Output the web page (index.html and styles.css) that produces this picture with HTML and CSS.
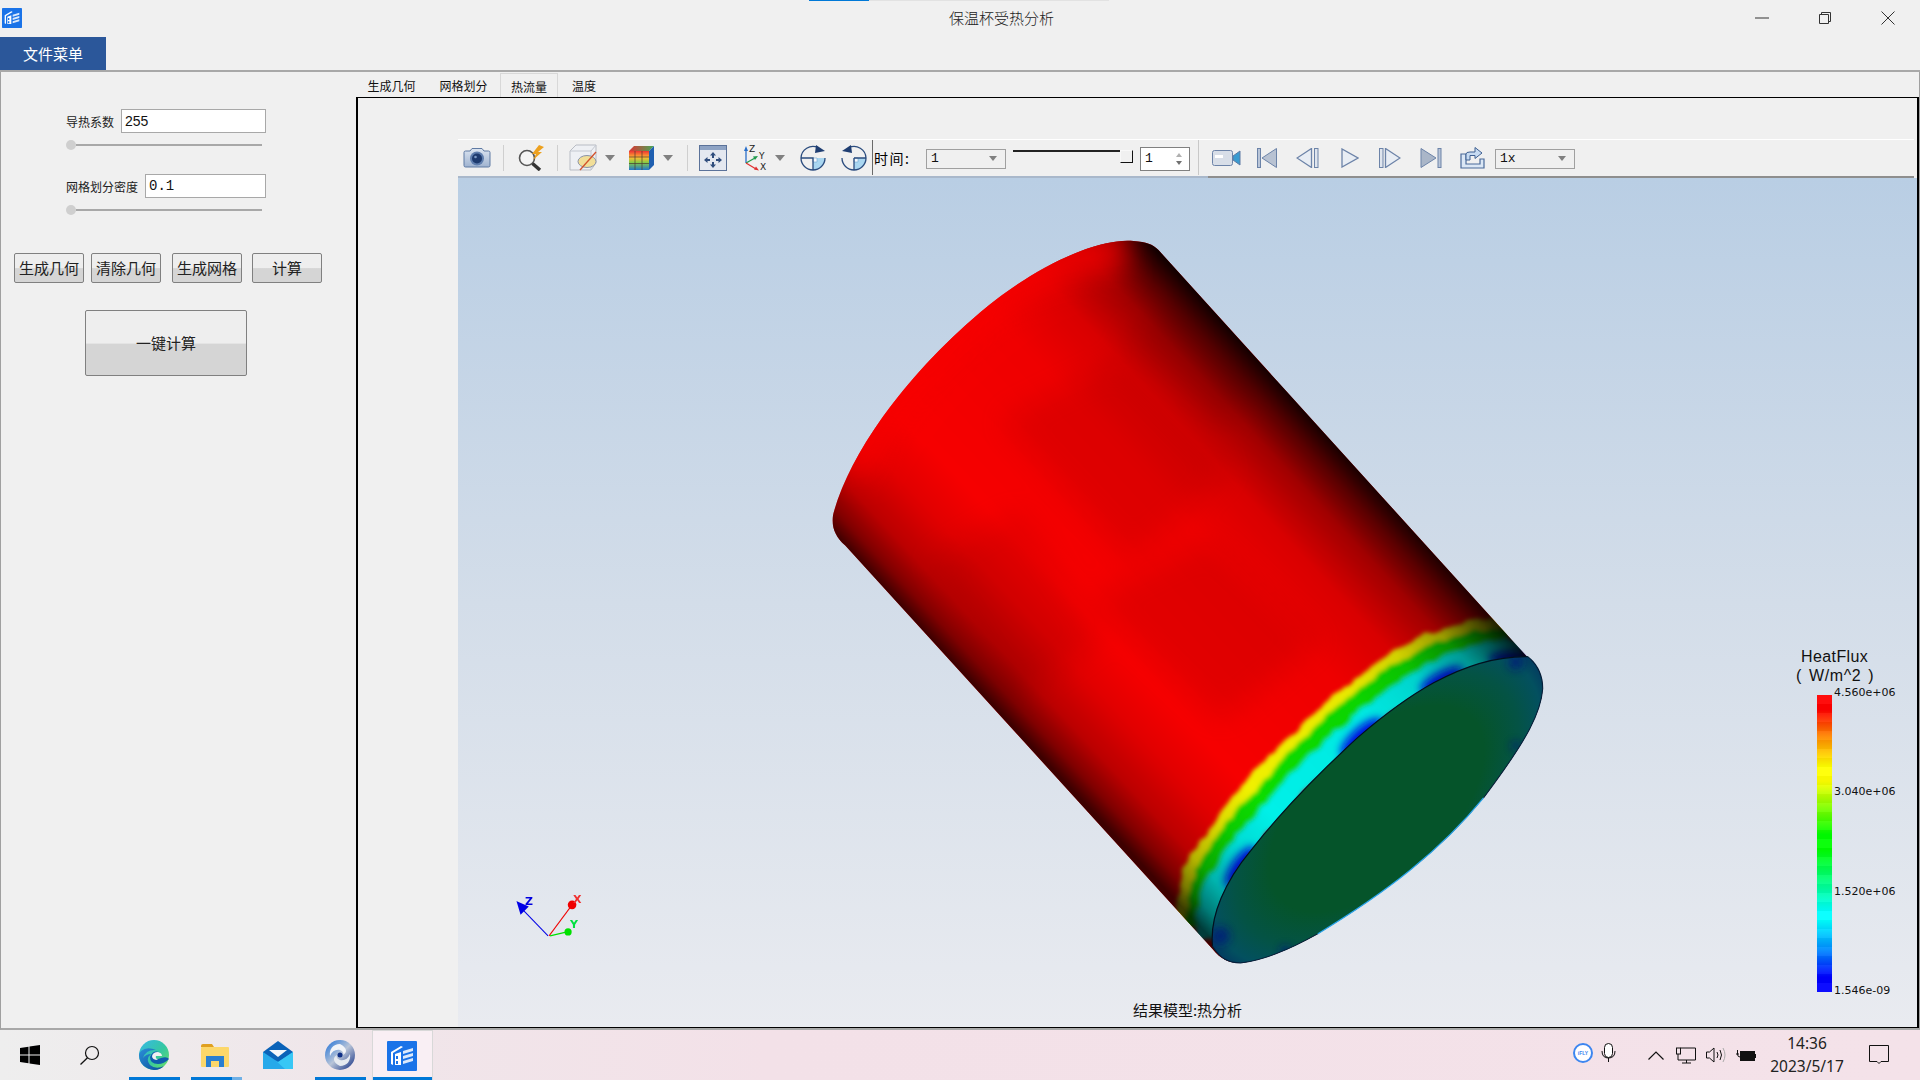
FILE: index.html
```html
<!DOCTYPE html>
<html lang="zh-CN">
<head>
<meta charset="utf-8">
<title>保温杯受热分析</title>
<link rel="stylesheet" href="styles.css">
</head>
<body>
<div class="window-strip"></div>
<header class="titlebar">
  <svg class="app-icon-small" viewBox="0 0 30 30"><rect width="30" height="30" rx="1" fill="#1a73e8"/><path d="M4 11 L14 5 L16 6 L6 12 V24 L4 23Z M8 13 L14 11 V24 L8 24Z" fill="#fff"/><path d="M16 10 L26 7 V10 L16 13Z M16 15 L26 12 V15 L16 18Z M16 20 L26 17 V20 L16 23Z" fill="#dbe9fb"/><path d="M9 15h2v3H9z M9 20h2v3H9z" fill="#1a73e8"/></svg>
  <div class="title-text">保温杯受热分析</div>
  <div class="win-controls">
    <svg class="win-min" viewBox="0 0 14 14"><path d="M0 7H14" stroke="#333" stroke-width="1"/></svg>
    <svg class="win-max" viewBox="0 0 14 14"><path d="M3.5 3.5V1.5H12.5V10.5H10.5M1.5 3.5H10.5V12.5H1.5Z" fill="none" stroke="#333"/></svg>
    <svg class="win-close" viewBox="0 0 14 14"><path d="M0.5 0.5L13.5 13.5M13.5 0.5L0.5 13.5" stroke="#333"/></svg>
  </div>
</header>
<nav class="menubar"><button class="menu-btn">文件菜单</button></nav>
<main class="main">
  <aside class="side">
    <div class="field field-one"><label>导热系数</label><input class="inp inp-a" value="255"></div>
    <div class="hslider"><span class="knob"></span><span class="track"></span></div>
    <div class="field field-two"><label>网格划分密度</label><input class="inp inp-b mono" value="0.1"></div>
    <div class="hslider"><span class="knob"></span><span class="track"></span></div>
    <div class="btn-row">
      <button class="btn">生成几何</button>
      <button class="btn">清除几何</button>
      <button class="btn btn-wide-gap">生成网格</button>
      <button class="btn btn-mid-gap">计算</button>
    </div>
    <button class="btn big">一键计算</button>
  </aside>
  <section class="work">
    <div class="tabs">
      <div class="tab t1">生成几何</div>
      <div class="tab t2">网格划分</div>
      <div class="tab t3 active">热流量</div>
      <div class="tab t4">温度</div>
    </div>
    <div class="frame">
      <div class="viewer">
        <div class="toolbar">
          <svg class="i-cam" viewBox="0 0 28 21"><defs><linearGradient id="cg" x1="0" y1="0" x2="0" y2="1"><stop offset="0" stop-color="#dce5f1"/><stop offset="1" stop-color="#9fb3d0"/></linearGradient></defs><path d="M1 5.5Q1 4 2.5 4H7L9 1.5H19L21 4H25.5Q27 4 27 5.500V18.500Q27 20 25.500 20H2.500Q1 20 1 18.500Z" fill="url(#cg)" stroke="#5f7aa3"/><circle cx="14" cy="11.500" r="7" fill="#5f7eae"/><circle cx="14" cy="11.500" r="5" fill="#1d3a6e"/><circle cx="12.500" cy="10" r="1.300" fill="#7d9ac6"/></svg>
          <span class="sep s1"></span>
          <svg class="i-mag" viewBox="0 0 29 26"><circle cx="11" cy="13" r="7.500" fill="#f4f4f4" stroke="#555" stroke-width="1.600"/><path d="M16.500 18.500L24 25" stroke="#333" stroke-width="3.500"/><path d="M23 0L16 9H20L17 15L26 7H22L28 2Z" fill="#eda11f"/></svg>
          <span class="sep s2"></span>
          <svg class="i-box" viewBox="0 0 29 28"><path d="M1 7L7 1H27V19L22 26H1Z" fill="#eef0f4" stroke="#b8bcc4"/><path d="M1 7H22V26M22 7L27 1" fill="none" stroke="#c4c8d0"/><ellipse cx="18" cy="17.500" rx="9" ry="6" fill="#f1de98" stroke="#8a93a8"/><path d="M11 26L27 8" stroke="#d2502a" stroke-width="1.300"/></svg>
          <svg class="caret c1" viewBox="0 0 10 6"><path d="M0 0H10L5 6Z" fill="#808080"/></svg>
          <svg class="i-cube" viewBox="0 0 27 26"><defs><linearGradient id="rb" x1="0" y1="0" x2="0" y2="1"><stop offset="0" stop-color="#e33"/><stop offset=".35" stop-color="#fb3"/><stop offset=".6" stop-color="#8c4"/><stop offset="1" stop-color="#27c"/></linearGradient><linearGradient id="rt" x1="0" y1="0" x2="1" y2="0"><stop offset="0" stop-color="#d33"/><stop offset="1" stop-color="#4a5"/></linearGradient></defs><path d="M1 6L6 1H26L21 6Z" fill="url(#rt)"/><path d="M1 6H21V25H1Z" fill="url(#rb)"/><path d="M21 6L26 1V20L21 25Z" fill="#1f5fb0"/><path d="M7 6V25M14 6V25M1 12H21M1 18.500H21" stroke="#4a3a30" stroke-width=".7"/></svg>
          <svg class="caret c2" viewBox="0 0 10 6"><path d="M0 0H10L5 6Z" fill="#808080"/></svg>
          <span class="sep s3"></span>
          <svg class="i-fit" viewBox="0 0 28 26"><rect x=".5" y=".5" width="27" height="25" fill="#e4e8f0" stroke="#5b7299"/><rect x="1" y="1" width="26" height="4" fill="#8ea3c4"/><path d="M14 7L11 10.500H13V13H15V10.500H17Z M14 23L11 19.500H13V17H15V19.500H17Z M5 15L8.500 12V14H11V16H8.500V18Z M23 15L19.500 12V14H17V16H19.500V18Z" fill="#2f4d7d"/></svg>
          <svg class="i-xyz" viewBox="0 0 23 27"><path d="M2 19V5" stroke="#2a6fc9" stroke-width="1.300"/><path d="M2 2L0 7H4Z" fill="#2a6fc9"/><path d="M2 19L11 14" stroke="#1f9a4c" stroke-width="1.300"/><path d="M14 12L9 12.500L11 16Z" fill="#1f9a4c"/><path d="M2 19L12 25" stroke="#e03030" stroke-width="1.300"/><path d="M15 26.500L10 25.500L12 22.500Z" fill="#e03030"/><text x="5" y="8" class="xyz-t">Z</text><text x="15" y="15" class="xyz-t">Y</text><text x="16" y="26" class="xyz-t">X</text></svg>
          <svg class="caret c3" viewBox="0 0 10 6"><path d="M0 0H10L5 6Z" fill="#808080"/></svg>
          <svg class="i-rot" viewBox="0 0 26 26"><path d="M13 13H25A12 12 0 0 1 13 25Z" fill="#a9d6f0"/><path d="M13 13h4v4h-4z" fill="#f4f8fc" stroke="#6ea4d0" stroke-width=".6"/><path d="M18 2.500A12 12 0 0 0 1 13A12 12 0 0 0 25 13M1 13H13V25" fill="none" stroke="#2b4c7e" stroke-width="1.300"/><path d="M16 0L25 6L15 8Z" fill="#1f3e72"/></svg>
          <svg class="i-rot2" viewBox="0 0 26 26"><path d="M13 13H25A12 12 0 0 1 13 25Z" fill="#a9d6f0"/><path d="M13 13h4v4h-4z" fill="#f4f8fc" stroke="#6ea4d0" stroke-width=".6"/><path d="M8 2.500A12 12 0 0 1 25 13A12 12 0 0 1 1 13M13 13H25M13 13V25" fill="none" stroke="#2b4c7e" stroke-width="1.300"/><path d="M10 0L1 6L11 8Z" fill="#1f3e72"/></svg>
          <span class="vline dark"></span>
          <span class="time-label">时间:</span>
          <div class="combo combo-a mono"><span>1</span><svg class="combo-caret" viewBox="0 0 8 5"><path d="M0 0H8L4 5Z" fill="#808080"/></svg></div>
          <div class="tslider"><span class="tline"></span><span class="thandle"></span></div>
          <div class="spin mono"><span>1</span><svg class="spin-arrows" viewBox="0 0 6 12"><path d="M3 0L6 4H0Z" fill="#b0b0b0"/><path d="M3 12L6 8H0Z" fill="#707070"/></svg></div>
          <span class="vline light"></span>
          <svg class="i-video" viewBox="0 0 29 16"><rect x=".5" y=".5" width="20" height="15" rx="2" fill="#d8dee8" stroke="#6c83a8"/><rect x="3" y="5" width="8" height="3" fill="#fff"/><path d="M21 6L28 1V15L21 10Z" fill="#3a9bd0" stroke="#5f7aa3"/></svg>
          <svg class="i-first" viewBox="0 0 20 20"><rect x=".5" y=".5" width="3" height="19" fill="#b9c5d8" stroke="#6c83a8"/><path d="M19.500 .5V19.500L5 10Z" fill="#b8c2d2" stroke="#6c83a8"/></svg>
          <svg class="i-prev" viewBox="0 0 23 20"><path d="M15.500 .5V19.500L1 10Z" fill="#e8edf4" stroke="#6c83a8" stroke-width="1.300"/><rect x="18.500" y=".5" width="3.500" height="19" fill="#dfe5ee" stroke="#6c83a8"/></svg>
          <svg class="i-play" viewBox="0 0 18 20"><path d="M1 1V19L17 10Z" fill="#e8edf4" stroke="#6c83a8" stroke-width="1.300"/></svg>
          <svg class="i-nexts" viewBox="0 0 22 20"><rect x=".5" y=".5" width="3.500" height="19" fill="#dfe5ee" stroke="#6c83a8"/><path d="M6.500 .5V19.500L21 10Z" fill="#e8edf4" stroke="#6c83a8" stroke-width="1.300"/></svg>
          <svg class="i-last" viewBox="0 0 22 20"><path d="M1 .5V19.500L16 10Z" fill="#aab6c8" stroke="#6c83a8"/><rect x="18" y=".5" width="3" height="19" fill="#b9c5d8" stroke="#6c83a8"/></svg>
          <svg class="i-export" viewBox="0 0 25 23"><path d="M1 8H6V18H20V13H24V22H1Z" fill="#dbe7f5" stroke="#4a6a9a" stroke-width="1.200"/><path d="M6 14V8Q6 6 10 6H15V1.500L22 7L15 12.500V9.500H10V14Z" fill="#c6daf1" stroke="#3f6092"/></svg>
          <div class="combo combo-b mono"><span>1x</span><svg class="combo-caret" viewBox="0 0 8 5"><path d="M0 0H8L4 5Z" fill="#808080"/></svg></div>
        </div>
        <div class="canvas">
          <svg class="scene" viewBox="458 178 1458 848" preserveAspectRatio="none">
            <defs>
              <clipPath id="body"><path d="M845 545C833 535 830 522 834 510C850 455 900 380 980 312C1040 262 1100 238 1133 241C1146 242 1152 244 1158 250L1527 657C1537 664 1542 675 1542 688C1540 715 1522 745 1483 797C1440 850 1385 892 1317 933C1290 948 1262 960 1240 962C1228 962 1220 958 1212 948Z"/></clipPath>
              <clipPath id="capclip"><path d="M1212 945C1209 915 1225 880 1250 850C1275 818 1310 780 1357 737C1400 700 1460 655 1527 656C1537 664 1542 675 1542 688C1540 715 1522 745 1483 797C1440 850 1385 892 1317 933C1290 948 1262 960 1240 962C1228 962 1220 958 1212 945Z"/></clipPath>
              <linearGradient id="shade" gradientUnits="userSpaceOnUse" x1="833" y1="533" x2="1148" y2="239">
                <stop offset="0" stop-color="#000" stop-opacity=".75"/>
                <stop offset=".04" stop-color="#000" stop-opacity=".48"/>
                <stop offset=".1" stop-color="#000" stop-opacity=".24"/>
                <stop offset=".2" stop-color="#000" stop-opacity=".08"/>
                <stop offset=".3" stop-color="#000" stop-opacity="0"/>
                <stop offset=".62" stop-color="#000" stop-opacity=".03"/>
                <stop offset=".76" stop-color="#000" stop-opacity=".12"/>
                <stop offset=".87" stop-color="#000" stop-opacity=".35"/>
                <stop offset=".94" stop-color="#000" stop-opacity=".65"/>
                <stop offset="1" stop-color="#000" stop-opacity=".95"/>
              </linearGradient>
              <radialGradient id="capfill" gradientUnits="userSpaceOnUse" cx="0" cy="0" r="1" gradientTransform="translate(1376 808) rotate(-43) scale(212 112)">
                <stop offset="0" stop-color="#05542a"/>
                <stop offset=".62" stop-color="#05542a"/>
                <stop offset=".82" stop-color="#045345"/>
                <stop offset=".95" stop-color="#03505f"/>
                <stop offset="1" stop-color="#034060"/>
              </radialGradient>
              <filter id="wob" x="-10%" y="-10%" width="120%" height="120%">
                <feTurbulence type="fractalNoise" baseFrequency="0.05" numOctaves="2" seed="11"/>
                <feDisplacementMap in="SourceGraphic" scale="10" xChannelSelector="R" yChannelSelector="G"/>
                <feGaussianBlur stdDeviation="2.200"/>
              </filter>
              <filter id="soft" x="-60%" y="-60%" width="220%" height="220%"><feGaussianBlur stdDeviation="4.500"/></filter>
              <filter id="softer" x="-50%" y="-50%" width="200%" height="200%"><feGaussianBlur stdDeviation="14"/></filter>
            </defs>
            <g clip-path="url(#body)">
              <rect x="800" y="220" width="780" height="760" fill="#f60000"/>
              <g filter="url(#softer)" fill="#a00000" opacity=".2">
                <path d="M1000 420L1120 360L1230 470L1130 560Z"/>
                <path d="M1090 600L1210 540L1320 640L1220 720Z"/>
                <path d="M930 560L1020 510L1100 640L1010 700Z"/>
                <path d="M1180 300L1260 380L1220 430L1120 340Z"/>
              </g>
              <g filter="url(#wob)" fill="none">
                <path transform="translate(-23 -26)" d="M1212 945C1209 915 1225 880 1250 850C1275 818 1310 780 1357 737C1400 700 1460 655 1527 656" stroke="#f0f000" stroke-width="26"/>
                <path transform="translate(-17 -19)" d="M1212 945C1209 915 1225 880 1250 850C1275 818 1310 780 1357 737C1400 700 1460 655 1527 656" stroke="#0cdc00" stroke-width="22"/>
                <path transform="translate(-5 -6)" d="M1212 945C1209 915 1225 880 1250 850C1275 818 1310 780 1357 737C1400 700 1460 655 1527 656" stroke="#06f0e8" stroke-width="22"/>
              </g>
              <g filter="url(#soft)" fill="#0008e8">
                <ellipse cx="1361" cy="737" rx="27" ry="10" transform="rotate(-42 1361 737)"/>
                <ellipse cx="1240" cy="866" rx="24" ry="9" transform="rotate(-55 1240 866)"/>
                <ellipse cx="1441" cy="679" rx="24" ry="8" transform="rotate(-28 1441 679)"/>
                <ellipse cx="1510" cy="657" rx="22" ry="7" transform="rotate(-3 1510 657)"/>
              </g>
              <rect x="800" y="220" width="780" height="760" fill="url(#shade)"/>
              <path d="M850 470C880 400 930 350 985 305C1040 262 1090 250 1125 250" fill="none" stroke="#f60000" stroke-width="46" opacity=".8" filter="url(#softer)"/>
            </g>
            <path d="M1212 945C1209 915 1225 880 1250 850C1275 818 1310 780 1357 737C1400 700 1460 655 1527 656C1537 664 1542 675 1542 688C1540 715 1522 745 1483 797C1440 850 1385 892 1317 933C1290 948 1262 960 1240 962C1228 962 1220 958 1212 945Z" fill="url(#capfill)"/>
            <g clip-path="url(#capclip)">
              <g filter="url(#soft)" fill="#021a78" opacity=".85">
                <circle cx="1220" cy="935" r="9"/>
                <circle cx="1515" cy="662" r="7"/>
                <circle cx="1285" cy="950" r="5"/>
                <circle cx="1515" cy="745" r="4"/>
              </g>
            </g>
            <path d="M1483 797C1440 850 1385 892 1317 933" fill="none" stroke="#29a7ee" stroke-width="1.200"/>
            <path d="M1212 945C1209 915 1225 880 1250 850C1275 818 1310 780 1357 737C1400 700 1460 655 1527 656" fill="none" stroke="#02101e" stroke-width="1.200"/>
            <path d="M1527 656C1537 664 1542 675 1542 688C1540 715 1522 745 1483 797M1317 933C1290 948 1262 960 1240 962C1228 962 1220 958 1212 945" fill="none" stroke="#04203c" stroke-width="1"/>
            <path d="M548 935L520 906" stroke="#0000e6" stroke-width="1"/>
            <path d="M518 902L527 906L521 912Z" fill="#0000e6" stroke="#0000e6" stroke-width="2"/>
            <text x="525" y="904" class="axis-t axis-z">Z</text>
            <path d="M549 935L572 904" stroke="#f00000" stroke-width="1"/>
            <circle cx="572" cy="904" r="4.300" fill="#f00000"/>
            <text x="573" y="902" class="axis-t axis-x">X</text>
            <path d="M550 935L567 931" stroke="#00e000" stroke-width="1.300"/>
            <circle cx="568" cy="931" r="3.600" fill="#00e000"/>
            <text x="570" y="927" class="axis-t axis-y">Y</text>
          </svg>
          <div class="legend">
            <div class="legend-title">HeatFlux</div>
            <div class="legend-unit">( W/m^2 )</div>
            <div class="legend-body">
              <div class="legend-bar"></div>
              <div class="legend-labels">
                <span>4.560e+06</span><span>3.040e+06</span><span>1.520e+06</span><span>1.546e-09</span>
              </div>
            </div>
          </div>
          <div class="caption">结果模型:热分析</div>
        </div>
      </div>
    </div>
  </section>
</main>
<footer class="taskbar">
  <svg class="tb-win" viewBox="0 0 20 20"><path d="M0 3L8.500 1.700V9.500H0Z M9.500 1.500L20 0V9.500H9.500Z M0 10.500H8.500V18.300L0 17Z M9.500 10.500H20V20L9.500 18.500Z" fill="#000"/></svg>
  <svg class="tb-search" viewBox="0 0 20 20"><circle cx="12" cy="8" r="6.500" fill="none" stroke="#111" stroke-width="1.200"/><path d="M7.500 12.800L.5 19.500" stroke="#111" stroke-width="1.300"/></svg>
  <div class="task-slot slot-edge on"><svg viewBox="0 0 30 30"><defs><linearGradient id="eg" x1="0" y1="0" x2="1" y2="1"><stop offset="0" stop-color="#36b8e8"/><stop offset=".55" stop-color="#35c8a0"/><stop offset="1" stop-color="#6ee060"/></linearGradient><linearGradient id="eb" x1="0" y1="0" x2="1" y2="1"><stop offset="0" stop-color="#2b8fd8"/><stop offset="1" stop-color="#0a4f9c"/></linearGradient></defs><circle cx="15" cy="15" r="15" fill="url(#eg)"/><path d="M0 15A15 15 0 0 0 25 26Q17 30 11 25Q6 19 12 14Q7 14 4 18Q7 9 17 10Q8 6 2 11Q0 13 0 15Z" fill="url(#eb)"/><path d="M11 17Q11 24 19 24Q25 24 30 19Q28 16 22 18Q16 21 15.500 16Q16 13 20 12Q14 10 11 17Z" fill="#0e5dae"/><path d="M13 16Q14 12 19 12Q23 13 23 16H17Q16 18 19 20Q13 20 13 16Z" fill="#f1f1f1"/></svg></div>
  <div class="task-slot slot-files on split"><svg viewBox="0 0 28 23"><path d="M0 2Q0 0 2 0H11L13 3H0Z" fill="#e0a020"/><rect y="3" width="28" height="20" rx="1" fill="#fcd76a"/><path d="M5 12H23V23H18V17H10V23H5Z" fill="#2a7fd0"/></svg></div>
  <div class="task-slot slot-mail"><svg viewBox="0 0 30 28"><path d="M0 11L15 0L30 11V28H0Z" fill="#0a62b8"/><path d="M6 9H24L15 16Z" fill="#f3f6fb"/><path d="M0 11L15 21L30 11V28H0Z" fill="#27a9ea"/><path d="M12 19L15 21L30 11V28H22Z" fill="#38c7f5"/></svg></div>
  <div class="task-slot slot-qq on"><svg viewBox="0 0 30 30"><defs><linearGradient id="qg" x1="0" y1="0" x2="1" y2="1"><stop offset="0" stop-color="#1a6fd8"/><stop offset=".5" stop-color="#b8c4d8"/><stop offset="1" stop-color="#0d2a80"/></linearGradient></defs><circle cx="15" cy="15" r="15" fill="url(#qg)"/><path d="M15 4C8 4 4 9 5 16C7 11 11 9 15 10C18 11 19 13 18 15C22 13 23 8 15 4Z" fill="#f2f4f8"/><path d="M15 26C22 26 26 21 25 14C23 19 19 21 15 20C12 19 11 17 12 15C8 17 7 22 15 26Z" fill="#e6eaf0"/><circle cx="15" cy="15" r="2.500" fill="#0f2f86"/></svg></div>
  <div class="task-slot slot-app on active"><svg viewBox="0 0 30 30"><rect width="30" height="30" rx="1" fill="#1a73e8"/><path d="M4 11L14 5L16 6L6 12V24L4 23Z M8 13L14 11V24H8Z" fill="#fff"/><path d="M16 10L26 7V10L16 13Z M16 15L26 12V15L16 18Z M16 20L26 17V20L16 23Z" fill="#dbe9fb"/><path d="M9 15h2v3H9z M9 20h2v3H9z" fill="#1a73e8"/></svg></div>
  <div class="tray">
    <div class="ifly"><span>iFLY</span></div>
    <svg class="tr-mic" viewBox="0 0 15 20"><rect x="3.500" y=".5" width="8" height="14" rx="4" fill="#fff" stroke="#111"/><path d="M1 8Q1 15 7.500 15Q14 15 14 8M7.500 15V19" fill="none" stroke="#111"/></svg>
    <svg class="tr-up" viewBox="0 0 16 9"><path d="M.5 8.500L8 1L15.500 8.500" fill="none" stroke="#111" stroke-width="1.200"/></svg>
    <svg class="tr-net" viewBox="0 0 20 17"><path d="M4.500 1H19.500V13H2V7M10.500 13V16M6 16H15" fill="none" stroke="#111"/><rect x=".5" y="1" width="4" height="6" fill="#f3e3e9" stroke="#111"/></svg>
    <svg class="tr-vol" viewBox="0 0 20 16"><path d="M.5 5H3.500L8 1V15L3.500 11H.5Z" fill="none" stroke="#111"/><path d="M11 5Q13 8 11 11M14 3Q17 8 14 13" fill="none" stroke="#111"/><path d="M17 1Q21 8 17 15" fill="none" stroke="#aaa"/></svg>
    <svg class="tr-bat" viewBox="0 0 20 13"><rect x="4.500" y="2.500" width="14" height="9" fill="#111" stroke="#111"/><rect x="18.500" y="5" width="1.500" height="4" fill="#111"/><path d="M0 5H3M1.500 1V5Q1.500 8 4 8" fill="none" stroke="#111"/></svg>
    <div class="clock"><div>14:36</div><div>2023/5/17</div></div>
    <svg class="tr-note" viewBox="0 0 20 20"><path d="M.5 .5H19.500V16.500H12L10 18.500L8 16.500H.5Z" fill="none" stroke="#111"/></svg>
  </div>
</footer>
</body>
</html>
```
FILE: styles.css
```css
* { box-sizing: border-box; }
html, body { margin: 0; height: 100%; }
body {
  width: 1920px; height: 1080px; overflow: hidden; display: flex; flex-direction: column;
  background: #f0f0f0; color: #111;
  font: 12px "Noto Sans CJK SC", "Liberation Sans", sans-serif; position: relative;
}
.mono { font-family: "Liberation Mono", "Noto Sans CJK SC", monospace; }
svg { display: block; flex: none; }

.window-strip {
  position: absolute; left: 809px; top: 0; width: 300px; height: 1px;
  background: linear-gradient(90deg, #0078d7 0 60px, #e2e2e2 60px);
}

.titlebar { height: 37px; flex: none; display: flex; align-items: center; padding: 0 0 2px 2px; position: relative; }
.app-icon-small { width: 20px; height: 20px; margin-top: 1px; }
.title-text { position: absolute; left: 0; right: 0; top: 8px; text-align: center; font-size: 15px; line-height: 20px; padding-left: 83px; color: #222; font-weight: 300; }
.win-controls { margin-left: auto; display: flex; align-items: center; }
.win-min, .win-max, .win-close { width: 14px; height: 14px; }
.win-min { margin-right: 49px; }
.win-max { margin-right: 49px; }
.win-close { margin-right: 25px; }

.menubar { height: 35px; flex: none; border-bottom: 2px solid #a8a8a8; }
.menu-btn {
  display: block; width: 106px; height: 33px; border: 0; padding: 0;
  background: #2b579a; color: #fff; font: 15px "Noto Sans CJK SC", sans-serif;
}

.main { flex: 1; display: flex; border-left: 1px solid #a0a0a0; border-right: 1px solid #a0a0a0; border-bottom: 2px solid #a8a8a8; min-height: 0; }

.side { width: 355px; flex: none; padding: 37px 0 0 65px; }
.field { display: flex; align-items: center; height: 24px; }
.field label { white-space: nowrap; font-size: 12px; width: 55px; color: #222; }
.field-two { margin-top: 23px; }
.field-two label { width: 79px; }
.inp { height: 24px; border: 1px solid #a8a8a8; background: #fff; padding: 0 3px; font: 14px "Liberation Sans", sans-serif; color: #111; outline: 0; }
.inp.mono { font-family: "Liberation Mono", monospace; }
.inp-a { width: 145px; }
.inp-b { width: 121px; }
.hslider { display: flex; align-items: center; height: 12px; margin-top: 6px; }
.knob { width: 10px; height: 10px; border-radius: 50%; background: #cfcfcf; flex: none; }
.track { width: 186px; height: 2px; background: #a8a8a8; }

.btn {
  display: block; width: 70px; height: 30px; padding: 0 0 2px; border: 1px solid #808080; border-radius: 2px;
  background: linear-gradient(#eeeeee 0 50%, #d5d5d5 52%); color: #222;
  font: 15px "Noto Sans CJK SC", sans-serif;
}
.btn-row { display: flex; gap: 7px; margin: 37px 0 0 -52px; }
.btn-wide-gap { margin-left: 4px; }
.btn-mid-gap { margin-left: 3px; }
.big { width: 162px; height: 66px; margin: 27px 0 0 19px; }

.work { flex: 1; min-width: 0; display: flex; flex-direction: column; }
.tabs { height: 25px; flex: none; display: flex; align-items: flex-end; }
.tab { height: 24px; line-height: 25px; font-size: 12px; color: #111; text-align: center; }
.t1 { width: 71px; }
.t2 { width: 73px; }
.t3 { width: 58px; }
.t4 { width: 50px; margin-left: 1px; }
.active { background: #f0f0f0; border: 1px solid #d8d8d8; border-bottom: 0; }

.frame { flex: 1; min-height: 0; border: 1px solid #000; border-width: 1px 2px 1px 2px; padding: 41px 0 0 100px; display: flex; }
.viewer { flex: 1; min-width: 0; display: flex; flex-direction: column; }

.toolbar {
  height: 39px; flex: none; display: flex; align-items: center; border-top: 1px solid #fff; margin-right: 3px; padding-bottom: 3px;
  background: linear-gradient(90deg, #a9b8cb 0 750px, #8e8e8e 750px) left bottom / 100% 2px no-repeat, #f0f0f0;
}
.sep { width: 1px; height: 26px; background: #cfcfcf; flex: none; }
.vline { width: 1px; flex: none; align-self: stretch; }
.vline.dark { background: #6a6a6a; margin-left: 5px; }
.vline.light { background: #c8c8c8; margin-left: 8px; }
.caret { width: 10px; height: 6px; }
.xyz-t { font: 9px "DejaVu Sans", sans-serif; fill: #222; }

.i-cam { width: 28px; height: 21px; margin-left: 5px; }
.s1 { margin-left: 12px; }
.i-mag { width: 29px; height: 26px; margin-left: 12px; }
.s2 { margin-left: 12px; }
.i-box { width: 29px; height: 28px; margin-left: 11px; }
.c1 { margin-left: 7px; }
.i-cube { width: 27px; height: 26px; margin-left: 13px; }
.c2 { margin-left: 8px; }
.s3 { margin-left: 14px; }
.i-fit { width: 28px; height: 26px; margin-left: 11px; }
.i-xyz { width: 23px; height: 27px; margin-left: 17px; }
.c3 { margin-left: 8px; }
.i-rot { width: 26px; height: 26px; margin-left: 15px; }
.i-rot2 { width: 26px; height: 26px; margin-left: 15px; }
.time-label { width: 36px; margin-left: 1px; font-size: 14px; letter-spacing: 1.500px; white-space: nowrap; color: #000; }
.combo { height: 20px; border: 1px solid #a0a0a0; display: flex; align-items: center; padding: 0 4px; font-size: 13px; position: relative; flex: none; margin-top: 2px; }
.combo-caret { width: 8px; height: 5px; margin-left: auto; margin-right: 4px; }
.combo-a { width: 80px; margin-left: 16px; }
.tslider { width: 120px; height: 14px; margin-left: 7px; position: relative; flex: none; margin-top: -4px; }
.tline { position: absolute; left: 0; right: 0; top: 1px; height: 2px; background: #222; }
.thandle { position: absolute; right: 0; top: 1px; width: 13px; height: 13px; background: #f0f0f0; border: 1px solid; border-color: #f8f8f8 #111 #111 #f8f8f8; }
.spin { width: 50px; height: 24px; margin-left: 7px; margin-top: 2px; border: 1px solid #808080; background: #fff; display: flex; align-items: center; padding: 0 4px; font-size: 13px; flex: none; }
.spin-arrows { width: 6px; height: 12px; margin-left: auto; margin-right: 3px; }
.i-video { width: 29px; height: 16px; margin-left: 13px; }
.i-first { width: 20px; height: 20px; margin-left: 16px; }
.i-prev { width: 23px; height: 20px; margin-left: 19px; }
.i-play { width: 18px; height: 20px; margin-left: 22px; }
.i-nexts { width: 22px; height: 20px; margin-left: 20px; }
.i-last { width: 22px; height: 20px; margin-left: 19px; }
.i-export { width: 25px; height: 23px; margin-left: 18px; }
.combo-b { width: 80px; margin-left: 10px; }

.canvas { flex: 1; min-height: 0; position: relative; background: linear-gradient(#b9cee4 0%, #d3dde9 50%, #e9ebf0 100%); }
.scene { width: 100%; height: 100%; }
.axis-t { font: bold 11px "DejaVu Sans", sans-serif; }
.axis-z { fill: #0000e0; }
.axis-x { fill: #f03030; }
.axis-y { fill: #00e040; }

.legend { position: absolute; left: 1336px; top: 469px; width: 122px; color: #111; }
.legend-title { font: 16px/19px "Liberation Sans", sans-serif; letter-spacing: .4px; padding-left: 7px; }
.legend-unit { font: 16px/19px "Liberation Sans", sans-serif; white-space: pre; word-spacing: 2px; letter-spacing: .6px; margin-left: 2px; }
.legend-body { display: flex; margin-top: 10px; height: 297px; margin-left: 23px; }
.legend-bar {
  width: 15px; height: 297px; flex: none;
  background:
    repeating-linear-gradient(rgba(255,255,255,.05) 0 9px, rgba(0,0,0,.03) 9px 18px),
    linear-gradient(#ff0000 0%, #ff0000 5%, #ff8800 14%, #ffff00 24%, #ffff00 29%, #00ff00 47%, #00ff00 52%, #00ffff 73%, #00ffff 76%, #0088ff 86%, #0000ff 95%, #0000ff 100%);
}
.legend-labels { display: flex; flex-direction: column; justify-content: space-between; margin: -9px 0 -6px 2px; font: 11px/14px "DejaVu Sans", sans-serif; color: #111; white-space: nowrap; }
.caption { position: absolute; left: 0; right: 0; bottom: 8px; text-align: center; font-size: 15px; line-height: 18px; color: #111; }

.taskbar { height: 50px; flex: none; display: flex; align-items: center; position: relative; background: linear-gradient(90deg, #eeeeee 0%, #f0e6ea 18%, #f3e1e8 40%, #f4e2e9 100%); }
.tb-win { width: 20px; height: 20px; margin-left: 20px; }
.tb-search { width: 20px; height: 20px; margin-left: 40px; }
.task-slot { height: 50px; display: flex; align-items: center; justify-content: center; flex: none; position: relative; }
.task-slot svg { width: 30px; height: 30px; }
.task-slot.on::after { content: ""; position: absolute; left: 0; right: 0; bottom: 0; height: 3px; background: #0078d7; }
.task-slot.split::after { background: linear-gradient(90deg, #0078d7 0 41px, #6fb0e6 41px); }
.slot-edge { width: 51px; margin-left: 29px; padding-right: 1px; }
.slot-files { width: 51px; margin-left: 11px; padding-right: 3px; }
.slot-files svg { width: 28px; height: 23px; }
.slot-mail { width: 51px; margin-left: 11px; padding-right: 1px; }
.slot-mail svg { height: 28px; }
.slot-qq { width: 51px; margin-left: 11px; padding-right: 1px; }
.slot-app { width: 61px; margin-left: 6px; padding-right: 1px; }
.slot-app.active { background: #f9eff4; }

.tray { margin-left: auto; display: flex; align-items: center; height: 50px; }
.ifly { width: 20px; height: 20px; border-radius: 50%; border: 2px solid #3d86f0; display: flex; align-items: center; justify-content: center; background: #fff; margin-top: -4px; }
.ifly span { font: bold 5px "Liberation Sans", sans-serif; color: #3d86f0; }
.tr-mic { width: 15px; height: 20px; margin: -4px 0 0 8px; }
.tr-up { width: 16px; height: 9px; margin-left: 32px; }
.tr-net { width: 20px; height: 17px; margin-left: 12px; }
.tr-vol { width: 20px; height: 16px; margin-left: 10px; }
.tr-bat { width: 20px; height: 13px; margin-left: 10px; }
.clock { width: 90px; margin-left: 6px; text-align: center; font: 15.500px/23px "Noto Sans", "Liberation Sans", sans-serif; color: #222; }
.tr-note { width: 20px; height: 20px; margin: 0 31px 0 17px; }
```
